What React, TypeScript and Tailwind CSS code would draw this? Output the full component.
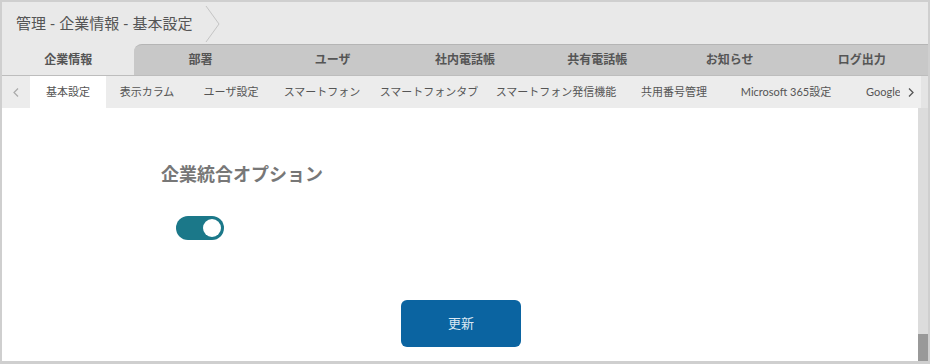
import React from "react";

const tabs = ["企業情報", "部署", "ユーザ", "社内電話帳", "共有電話帳", "お知らせ", "ログ出力"];
const subs = [
  { label: "基本設定", w: 76 },
  { label: "表示カラム", w: 82 },
  { label: "ユーザ設定", w: 86 },
  { label: "スマートフォン", w: 96 },
  { label: "スマートフォンタブ", w: 118 },
  { label: "スマートフォン発信機能", w: 136 },
  { label: "共用番号管理", w: 100 },
  { label: "Microsoft 365設定", w: 124 },
  { label: "Google", w: 70 },
];

export default function App() {
  return (
    <div
      className="w-[930px] h-[364px] overflow-hidden flex flex-col border-2 border-b-[3px] border-[#cfcfcf] bg-white"
      style={{ fontFamily: '"Lato", "Noto Sans CJK JP", sans-serif' }}
    >
      {/* header */}
      <div className="h-[42px] bg-[#e9e9e9] flex items-center relative shrink-0">
        <span className="ml-[14px] text-[15px] text-[#555]">管理 - 企業情報 - 基本設定</span>
        <svg className="absolute left-[203px] top-[3px]" width="16" height="38" viewBox="0 0 16 38">
          <polyline points="1,1 14,19 1,37" fill="none" stroke="#c4c4c4" strokeWidth="1" />
        </svg>
      </div>
      {/* main tabs */}
      <div className="h-[32px] flex bg-[#e9e9e9] border-b border-[#bdbdbd] shrink-0">
        {tabs.map((t, i) => (
          <div
            key={t}
            className={
              "flex-1 flex items-center justify-center text-[12px] font-bold text-[#555] " +
              (i === 0
                ? "bg-[#e9e9e9]"
                : i === 1
                ? "bg-[#c8c8c8] border-t border-[#b5b5b5] rounded-tl-[8px]"
                : "bg-[#c8c8c8] border-t border-[#b5b5b5]")
            }
          >
            {t}
          </div>
        ))}
      </div>
      {/* sub tabs */}
      <div className="h-[32px] flex bg-[#ececec] shrink-0 relative">
        <div className="w-[28px] flex items-center justify-center">
          <svg width="6" height="9" viewBox="0 0 6 9">
            <polyline points="5,0.5 1,4.5 5,8.5" fill="none" stroke="#aaa" strokeWidth="1.2" />
          </svg>
        </div>
        <div className="flex flex-1 overflow-hidden">
          {subs.map((s, i) => (
            <div
              key={s.label}
              style={{ width: s.w }}
              className={
                "shrink-0 flex items-center text-[11px] text-[#555] whitespace-nowrap " +
                (i === 0 ? "bg-white justify-center" : i === subs.length - 1 ? "justify-start pl-[18px]" : "justify-center")
              }
            >
              {s.label}
            </div>
          ))}
        </div>
        <div className="absolute right-0 top-0 h-[32px] w-[28px] bg-[#e4e4e4] flex">
          <div className="w-[21px] bg-[#efefef] flex items-center justify-center">
            <svg width="6" height="9" viewBox="0 0 6 9">
              <polyline points="1,0.5 5,4.5 1,8.5" fill="none" stroke="#555" strokeWidth="1.3" />
            </svg>
          </div>
        </div>
      </div>
      {/* content */}
      <div className="flex-1 flex">
        <div className="flex-1 flex flex-col">
          <div className="pl-[159px] pt-[54px] text-[18px] font-bold text-[#777] leading-[24px]">企業統合オプション</div>
          <div className="pl-[174px] pt-[30px]">
            <div className="w-[48px] h-[24px] rounded-full bg-[#1b7889] flex items-center justify-end pr-[3px]">
              <div className="w-[18px] h-[18px] rounded-full bg-white" />
            </div>
          </div>
          <div className="flex justify-center pl-[2px] pt-[60px]">
            <button className="w-[120px] h-[47px] rounded-[6px] bg-[#0b64a1] text-[#dbe8f3] text-[13px]">更新</button>
          </div>
        </div>
        <div className="w-[10px] bg-[#dcdcdc] flex flex-col justify-end">
          <div className="h-[27px] bg-[#999]" />
        </div>
      </div>
    </div>
  );
}
